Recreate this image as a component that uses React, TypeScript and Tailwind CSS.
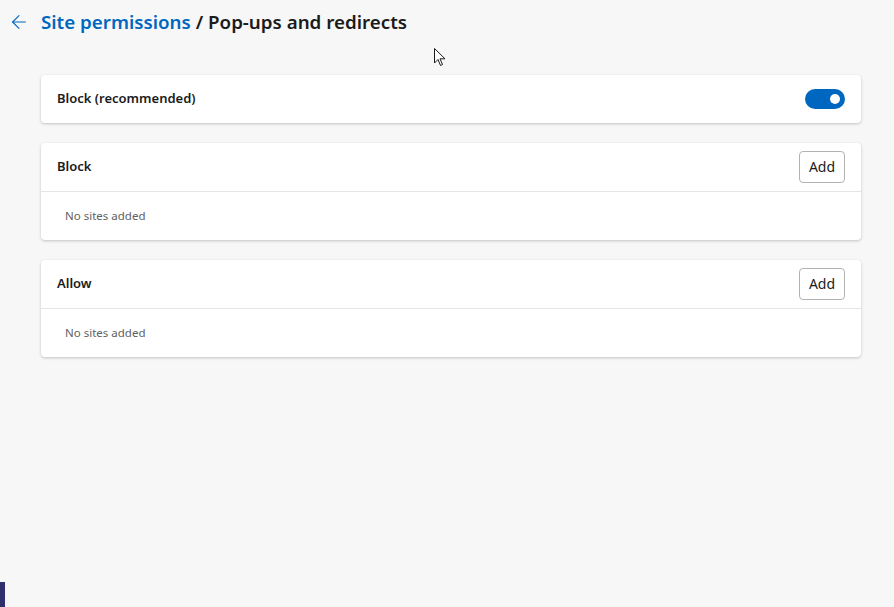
import { ArrowLeft } from 'lucide-react'

function Toggle() {
  return (
    <div className="flex h-5 w-10 items-center justify-end rounded-full bg-[#0067c0] pr-[5px]">
      <div className="h-[10px] w-[10px] rounded-full bg-white" />
    </div>
  )
}

function SiteList({ title }: { title: string }) {
  return (
    <div className="rounded bg-white shadow-[0_1px_3px_rgba(0,0,0,0.22)]">
      <div className="flex h-[49px] items-center justify-between border-b border-[#e5e5e5] px-4">
        <span className="text-[13px] font-semibold text-[#1b1b1b]">{title}</span>
        <button className="h-8 w-[46px] rounded-sm border border-[#b3b3b3] bg-white text-sm text-[#1b1b1b]">
          Add
        </button>
      </div>
      <div className="flex h-12 items-center pl-6 text-[11.5px] text-[#616161]">No sites added</div>
    </div>
  )
}

export default function App() {
  return (
    <div className="relative h-[607px] w-[894px] overflow-hidden bg-[#f7f7f7] font-['Noto_Sans',sans-serif]">
      <div className="flex h-11 items-center pl-[8px]">
        <button className="mr-[11px] text-[#0067c0]">
          <ArrowLeft className="h-[22px] w-[22px]" strokeWidth={1.2} />
        </button>
        <h1 className="text-[18.75px] font-semibold text-[#1b1b1b]">
          <span className="text-[#0067c0]">Site permissions</span> / Pop-ups and redirects
        </h1>
      </div>

      <div className="flex flex-col gap-5 pl-[41px] pr-[33px] pt-[31px]">
        <div className="flex h-12 items-center justify-between rounded bg-white px-4 shadow-[0_1px_3px_rgba(0,0,0,0.22)]">
          <span className="text-[13px] font-semibold text-[#1b1b1b]">Block (recommended)</span>
          <Toggle />
        </div>
        <SiteList title="Block" />
        <SiteList title="Allow" />
      </div>

      {/* mouse cursor */}
      <svg className="absolute left-[434px] top-[48px]" width="12" height="20" viewBox="0 0 12 20">
        <path d="M0.5 0.5 L0.5 15 L4 11.5 L6.5 17.5 L8.5 16.5 L6 10.8 L11 10.8 Z" fill="white" stroke="#1b1b1b" strokeWidth="1" />
      </svg>

      <div className="absolute bottom-0 left-0 h-[25px] w-[5px] bg-[#2e2f6b]" />
    </div>
  )
}
